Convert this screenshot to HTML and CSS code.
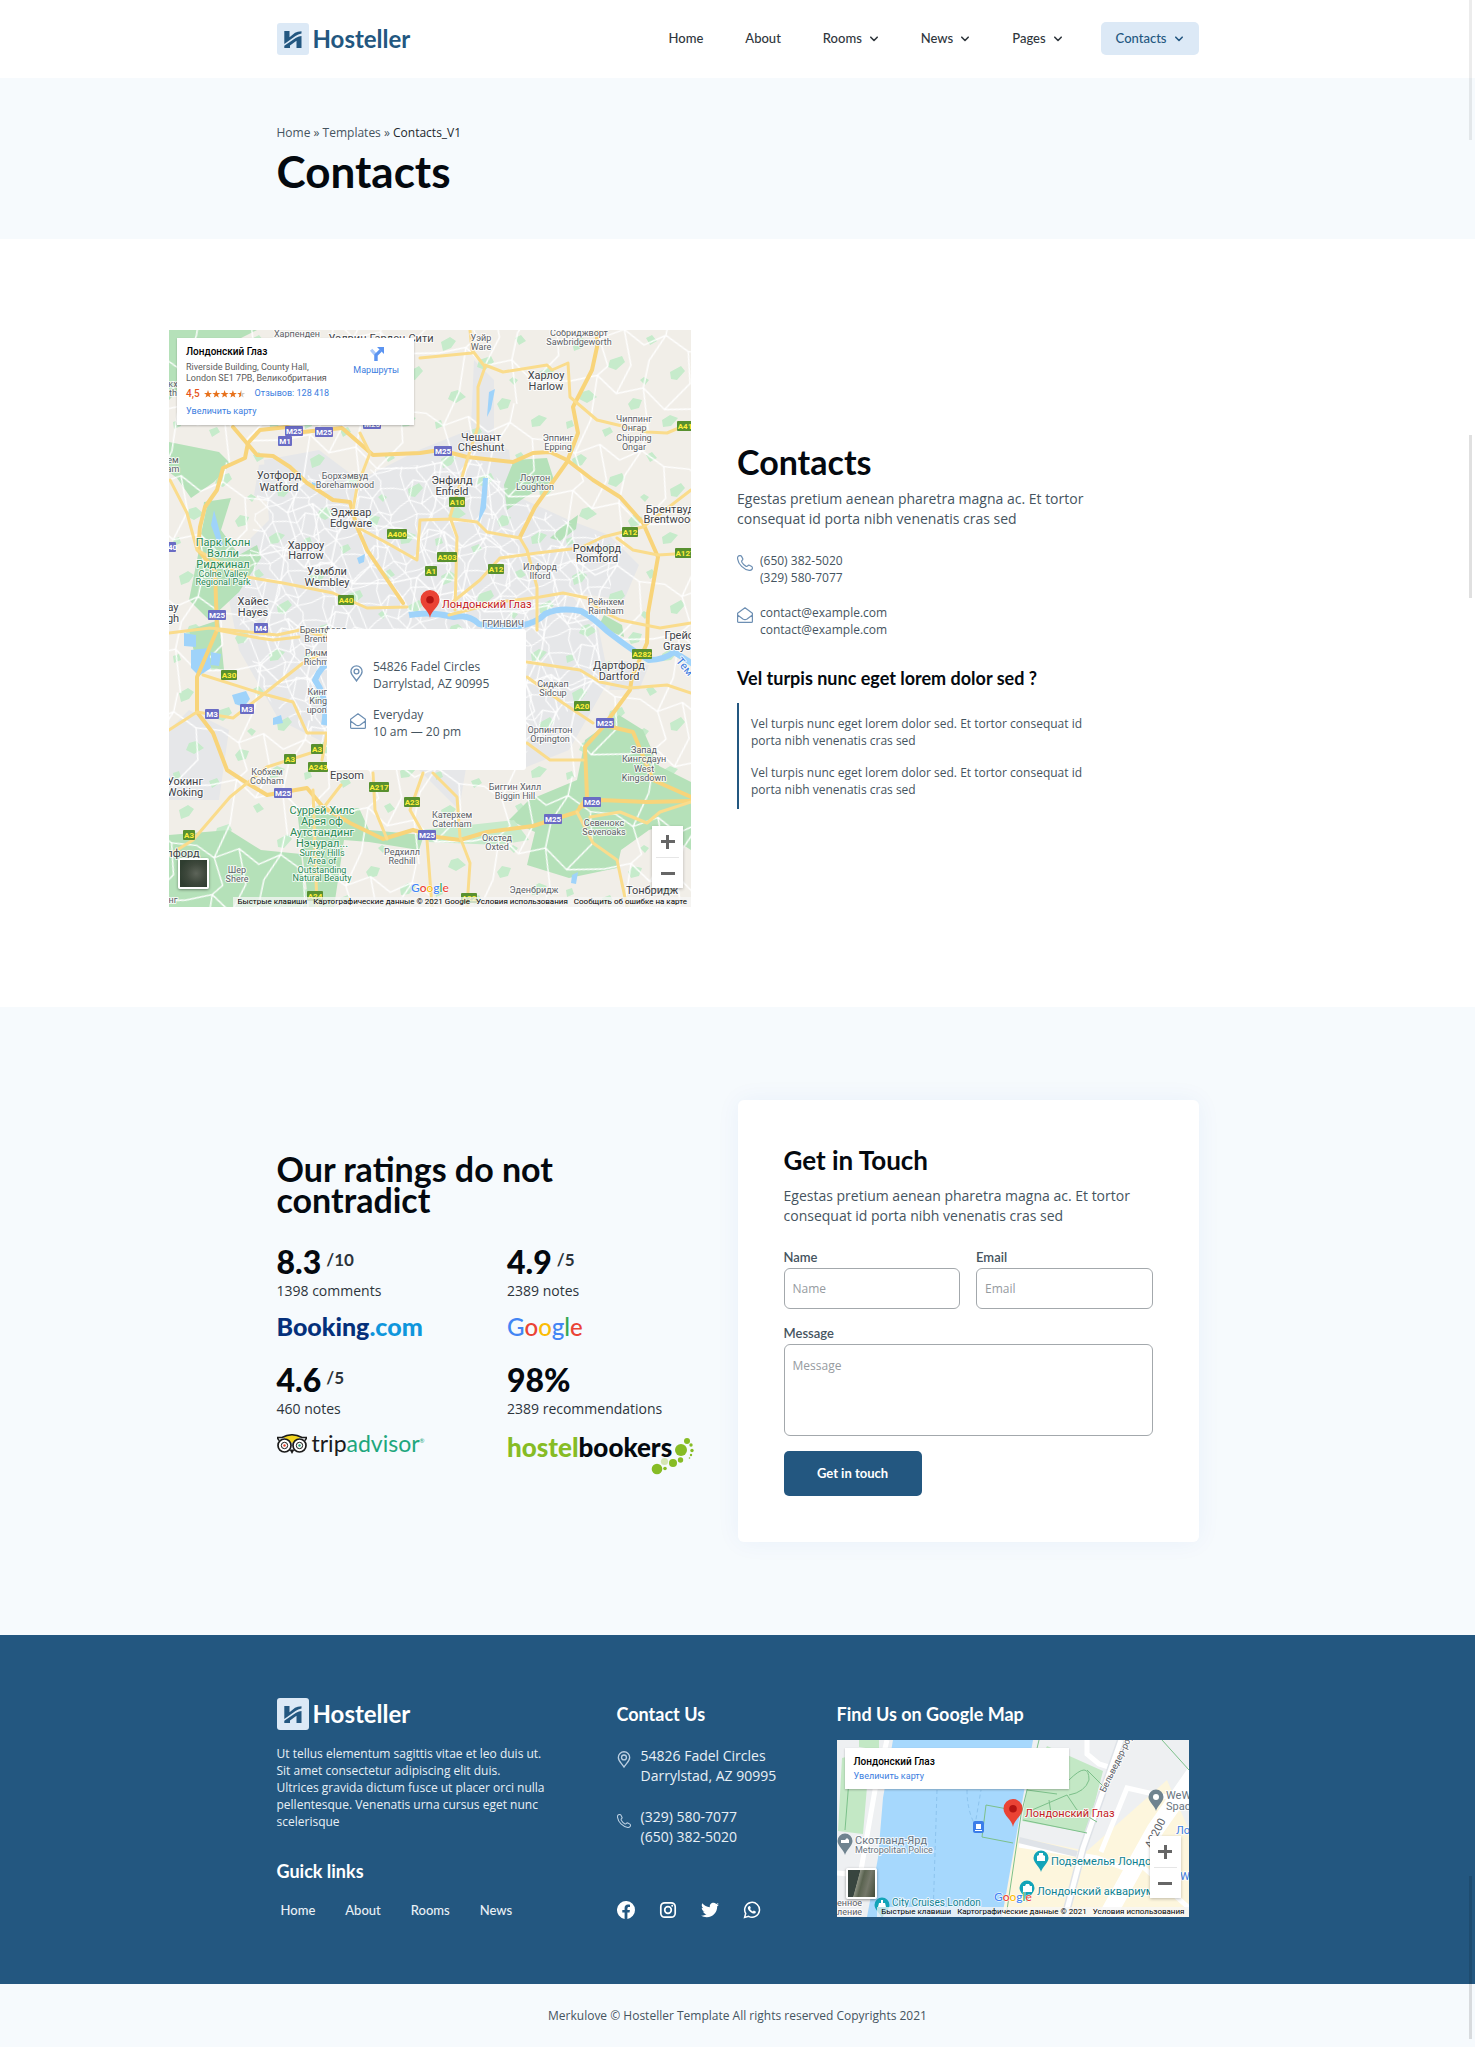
FILE: index.html
```html
<!DOCTYPE html>
<html lang="en">
<head>
<meta charset="utf-8">
<meta name="viewport" content="width=device-width, initial-scale=1">
<title>Contacts – Hosteller</title>
<link rel="stylesheet" href="styles.css">
</head>
<body>
<svg class="defs" width="0" height="0" aria-hidden="true">
  <defs>
    <symbol id="mark" viewBox="0 0 32 32">
      <rect width="32" height="32" rx="3" fill="#dce9f6"/>
      <path d="M7.300 8h5.200v6.200L18 9.800Q20.300 8.300 24.500 8.300V10.500Q21 11 18.500 13L7.300 21zM24.500 13V25h-5V17.800L13 22.500V25H7.300V22.800L19 14.800Q22 13 24.500 13z" fill="#235780"/>
    </symbol>
    <symbol id="chev" viewBox="0 0 10 10"><path d="M1.800 3.200L5 6.500l3.200-3.300" fill="none" stroke="currentColor" stroke-width="1.600" stroke-linecap="round" stroke-linejoin="round"/></symbol>
    <symbol id="phone" viewBox="0 0 16 16"><path d="M1.100 1.300C2 .4 3.700.3 4.400 1.200l1.300 2.400c.3.700.1 1.200-.5 1.700-.7.600-.7 1.100-.3 1.900.9 1.600 2.200 3 3.900 3.900.8.400 1.300.4 1.900-.3.500-.6 1-.8 1.700-.5l2.300 1.300c.9.600 1 2 .1 2.900-.7.700-1.600 1-2.500.9C6.600 14.600 1.400 9.400.6 3.800.5 2.800.5 1.900 1.100 1.300z" fill="none" stroke="currentColor" stroke-width="1.200"/></symbol>
    <symbol id="mail" viewBox="0 0 16 16"><path d="M.6 6.200L8 .8l7.400 5.400v8.200c0 .6-.4 1-1 1H1.600c-.6 0-1-.4-1-1zM.9 8.200l5 3.800c1.500 1 2.700 1 4.200 0l5-3.800" fill="none" stroke="currentColor" stroke-width="1.200" stroke-linejoin="round"/></symbol>
    <symbol id="place" viewBox="0 0 14 18"><path d="M7 17C5 13.300 1 10.800 1 6.800a6 6 0 0 1 12 0C13 10.800 9 13.300 7 17z" fill="none" stroke="currentColor" stroke-width="1.400"/><circle cx="7" cy="6.800" r="2.600" fill="none" stroke="currentColor" stroke-width="1.400"/></symbol>
    <symbol id="pin" viewBox="0 0 20 28"><path d="M10 28C9 20.500.5 17 .5 9.500a9.500 9.500 0 0 1 19 0C19.500 17 11 20.500 10 28z" fill="#ea4335"/><circle cx="10" cy="9.800" r="3.800" fill="#b31412"/></symbol>
    <g id="poi"><path d="M0 14C-1 9-7.500 5-7.500 0a7.500 7.500 0 0 1 15 0C7.500 5 1 9 0 14z"/></g>
    <rect id="m2" x="-7" y="-5" width="14" height="10" rx="1" fill="#6a6cc4"/>
    <rect id="m3" x="-9" y="-5" width="18" height="10" rx="1" fill="#6a6cc4"/>
    <rect id="a2" x="-6" y="-5" width="12" height="10" rx="1" fill="#58902f"/>
    <rect id="a3" x="-8" y="-5" width="16" height="10" rx="1" fill="#58902f"/>
    <rect id="a4" x="-10" y="-5" width="20" height="10" rx="1" fill="#58902f"/>
    <pattern id="lanes" width="96" height="84" patternUnits="userSpaceOnUse" patternTransform="rotate(12) scale(1.400)">
      <path d="M0 20L14 26 30 16 46 24 60 14 78 22 96 20M0 60L18 52 34 62 52 54 70 66 96 60M20 0L14 26 24 44 18 52 20 84M60 0L60 14 52 34 52 54 62 84M78 22L84 44 70 66M30 16L40 40 34 62" fill="none" stroke="#fff" stroke-width="1" stroke-linejoin="round"/>
    </pattern>
    <pattern id="streets" width="47" height="43" patternUnits="userSpaceOnUse" patternTransform="rotate(-17) scale(1.200)">
      <path d="M0 9L8 13 17 7 27 12 36 6 47 9M0 25L9 22 18 28 29 24 38 30 47 25M0 37L12 35 24 39 35 36 47 37M8 0L8 13 9 22 12 35 8 43M22 0L27 12 18 28 24 39 22 43M38 0L36 6 38 30 35 36 38 43M17 7L9 22M27 12L29 24 35 36" fill="none" stroke="#fff" stroke-width=".9"/>
    </pattern>
    <pattern id="groves" width="131" height="117" patternUnits="userSpaceOnUse">
      <path d="M10 12l9-5 6 4-5 7-8 3zM48 30l12-4 3 6-9 8-8-3zM84 8l6-3 5 6-7 4zM108 42l11-6 4 5-8 9-6-1zM20 62l7-2 8 7-10 6-8-4zM66 74l5-6 9 2-3 8-8 2zM100 90l8-5 8 3-7 8-8 1zM40 100l8-3 3 5-8 5zM4 92l6-2 2 6-7 3zM78 50l4-3 5 3-4 5z" fill="#c6ebcb"/>
    </pattern>
  </defs>
</svg>

<header class="site-header">
  <div class="container bar">
    <a class="brand" href="#"><svg class="brand-mark" aria-hidden="true"><use href="#mark"/></svg>Hosteller</a>
    <nav class="nav" aria-label="Main">
      <a href="#">Home</a>
      <a href="#">About</a>
      <a href="#">Rooms<svg class="chev" aria-hidden="true"><use href="#chev"/></svg></a>
      <a href="#">News<svg class="chev" aria-hidden="true"><use href="#chev"/></svg></a>
      <a href="#">Pages<svg class="chev" aria-hidden="true"><use href="#chev"/></svg></a>
      <a class="nav-active" href="#">Contacts<svg class="chev" aria-hidden="true"><use href="#chev"/></svg></a>
    </nav>
  </div>
</header>

<main>
  <section class="hero">
    <div class="container">
      <p class="crumbs"><a href="#">Home</a> » <a href="#">Templates</a> » <span>Contacts_V1</span></p>
      <h1>Contacts</h1>
    </div>
  </section>

  <section class="where">
    <div class="wide where-grid">
      <div class="map">
        <svg class="map-art" viewBox="0 0 522 577" role="img" aria-label="Map of London">
          <rect width="522" height="577" fill="#f1eee8"/>
          <path d="M95 130L150 120 190 150 250 120 300 100 340 120 345 165 400 190 440 205 470 235 455 270 400 262 430 300 440 350 400 420 350 440 300 420 290 480 250 440 180 440 150 410 110 390 70 320 60 270 70 220 100 190z" fill="#e6e7e9"/>
          <path d="M90 135L135 130 150 160 115 180 85 165zM305 30L325 50 325 125 300 140zM20 380L60 400 50 470 0 470V400zM450 330L480 335 470 360 440 360z" fill="#e6e7e9"/>
          <rect width="522" height="577" fill="url(#groves)"/>
          <path d="M0 0H88L60 14 20 50 0 70zM0 112L50 122 62 134 45 152 22 168 8 148 0 142zM35 172L62 168 52 200 70 225 88 215 92 228 70 262 40 290 20 270 30 220zM0 505L60 500 92 520 132 524 138 577H0zM128 480L190 478 200 500 255 505 250 520 200 512 175 510 165 577 140 577zM20 300L50 290 55 340 28 335zM416 410L450 385 474 400 490 436 522 452 522 488 480 500 452 520 448 538 400 548 358 535 366 502 340 490 360 470 408 450z" fill="#b5e1b9"/>
          <path d="M345 130L378 128 385 150 355 168 338 180 335 155zM460 440L522 455V520L490 500zM395 195l14-10-2 14-16 12-10-3zM435 285l18 10 2 12-10-4-14-10z" fill="#b5e1b9"/>
          <path d="M251 500L300 495 345 490 360 510 330 515 260 512zM80 65l20-5-10 30-20 0z" fill="#c7eacb"/>
          <rect width="522" height="577" fill="url(#lanes)"/>
          <path d="M90 150L250 135 300 120 350 170 450 215 440 265 425 300 435 345 380 400 340 440 180 440 100 370 70 300 80 230z" fill="url(#streets)"/>
          <path d="M15 303l12 2 0 12-12-1zM22 320l18-2 2 20-12 8-8-8zM42 322l10 2-2 12-8-1zM63 365l14-4 4 8-6 8-9-3zM104 388l8-3 2 8-10 2zM314 148l5 0-2 30-8 16 3-22zM320 62l6-3-4 20-4 8zM45 180l4 15 5 20-4 2-8-22zM143 152l8 3-2 6-6-2zM188 228l8-4-1 8-5 2zM403 545l6-3-2 12-5-1z" fill="#9fd3fa"/>
          <path d="M155 395Q160 370 146 350 152 335 165 330M240 285Q262 281 285 287 300 284 310 294 330 300 350 296 368 293 376 284 390 277 412 281 425 288 438 301 465 322 480 330 495 330 505 322L524 334" fill="none" stroke="#9fd3fa" stroke-width="6" stroke-linejoin="round"/>
          <g fill="none" stroke-linejoin="round" stroke-linecap="round">
            <g stroke="#f8d47a" stroke-width="4">
              <path d="M173 98L134 102 118 97 91 100 79 113 76 128 54 138 48 160 36 177 31 197 29 220 46 240 48 300 28 347 28 382 44 403 58 440 78 453 98 465 138 458 154 477 181 493 214 509 244 500 268 507 291 510 318 502 364 496 408 482 418 467 416 417 434 397 461 360 463 347 478 313 479 283 489 227 474 193 451 167 424 150 398 130 381 122 364 123 344 132 298 127 271 120 251 123 204 125z"/>
              <path d="M428 0L428 17 423 40 404 77 409 103 398 132 366 177 351 207M64 97L88 125 104 126 121 137 138 153 164 170 181 172 188 197 198 220 234 273M434 395L464 402 484 450 522 467M411 477L431 470 478 472 522 471"/>
            </g>
            <g stroke="#fadc8c" stroke-width="3">
              <path d="M301 0L303 20 316 37 309 57 309 97 299 127 281 187 288 207 286 280M251 28L303 23M316 35L334 42 378 35 383 40 399 33 401 67 428 90 478 102 498 103 522 93M188 197L218 213 248 230 251 190 284 189 308 192 318 202 351 208 358 220 368 257 368 300"/>
              <path d="M280 275L311 250 331 228 368 223 411 218 434 207 474 197 522 160M448 208L464 220 489 225 522 223M280 285L330 272 371 267 394 263 418 268 431 280 451 290 491 298 522 293M191 103L201 123 188 157 184 180M1 150L18 183 28 220 78 247 114 253 164 263 198 278 238 277M0 303L41 298 108 305 131 300 158 307M0 400L28 382 64 388 91 367 134 333 165 318M34 345L91 363 124 372 138 403 158 403 153 430"/>
              <path d="M0 525L24 510 61 467 98 437 151 420M144 460L148 577M204 443L206 480 218 509M254 443L241 480 258 510 263 577M264 443L288 467 291 507 301 533 298 577M358 332L411 340 431 352 461 358 498 355 522 363M358 347L394 373 424 393M408 482L424 513 448 530 458 577M421 487L451 482 478 493 491 482 522 472M358 413L381 430 414 430M155 477L172 455M48 300L90 308 104 310 130 307"/>
            </g>
          </g>
          <g class="lbl" text-anchor="middle">
            <text x="128" y="7">Харпенден</text>
            <g class="town">
              <text x="212" y="12">Уэлвин-Гарден-Сити</text>
              <text x="110" y="149">Уотфорд</text><text x="110" y="161">Watford</text>
              <text x="182" y="186">Эджвар</text><text x="182" y="197">Edgware</text>
              <text x="137" y="219">Харроу</text><text x="137" y="229">Harrow</text>
              <text x="158" y="245">Уэмбли</text><text x="158" y="256">Wembley</text>
              <text x="84" y="275">Хайес</text><text x="84" y="286">Hayes</text>
              <text x="377" y="49">Харлоу</text><text x="377" y="60">Harlow</text>
              <text x="312" y="111">Чешант</text><text x="312" y="121">Cheshunt</text>
              <text x="283" y="154">Энфилд</text><text x="283" y="165">Enfield</text>
              <text x="501" y="183">Брентвуд</text><text x="501" y="193">Brentwood</text>
              <text x="428" y="222">Ромфорд</text><text x="428" y="232">Romford</text>
              <text x="450" y="339">Дартфорд</text><text x="450" y="350">Dartford</text>
              <text x="510" y="309">Грейс</text><text x="508" y="320">Grays</text>
              <text x="16" y="455">Уокинг</text><text x="16" y="466">Woking</text>
              <text x="178" y="449">Epsom</text><text x="483" y="564">Тонбридж</text>
              <text x="14" y="527">лфорд</text><text x="4" y="281">ay</text><text x="4" y="292">gh</text>
            </g>
            <text x="4" y="133">ем</text><text x="4" y="142">am</text><text x="4" y="57">кх</text><text x="4" y="66">th</text><text x="4" y="573">нг</text>
            <text x="176" y="149">Борхэмвуд</text><text x="176" y="158">Borehamwood</text>
            <text x="312" y="11">Уэйр</text><text x="312" y="20">Ware</text>
            <text x="410" y="6">Собриджворт</text><text x="410" y="15">Sawbridgeworth</text>
            <text x="389" y="111">Эппинг</text><text x="389" y="120">Epping</text>
            <text x="465" y="92">Чиппинг</text><text x="465" y="101">Онгар</text><text x="465" y="111">Chipping</text><text x="465" y="120">Ongar</text>
            <text x="366" y="151">Лоутон</text><text x="366" y="160">Loughton</text>
            <text x="371" y="240">Илфорд</text><text x="371" y="249">Ilford</text>
            <text x="437" y="275">Рейнхем</text><text x="437" y="284">Rainham</text>
            <text x="154" y="303">Брентфорд</text><text x="154" y="312">Brentford</text>
            <text x="155" y="326">Ричмонд</text><text x="155" y="335">Richmond</text>
            <text x="158" y="365">Кингстон</text><text x="158" y="374">Kingston</text><text x="165" y="383">upon Thames</text>
            <text x="98" y="445">Кобхем</text><text x="98" y="454">Cobham</text>
            <text x="233" y="525">Редхилл</text><text x="233" y="534">Redhill</text>
            <text x="68" y="543">Шер</text><text x="68" y="552">Shere</text>
            <text x="334" y="297">ГРИНВИЧ</text>
            <text x="384" y="357">Сидкап</text><text x="384" y="366">Sidcup</text>
            <text x="381" y="403">Орпингтон</text><text x="381" y="412">Orpington</text>
            <text x="475" y="423">Запад</text><text x="475" y="432">Кингсдаун</text><text x="475" y="442">West</text><text x="475" y="451">Kingsdown</text>
            <text x="346" y="460">Биггин Хилл</text><text x="346" y="469">Biggin Hill</text>
            <text x="283" y="488">Катерхем</text><text x="283" y="497">Caterham</text>
            <text x="328" y="511">Окстед</text><text x="328" y="520">Oxted</text>
            <text x="435" y="496">Севенокс</text><text x="435" y="505">Sevenoaks</text>
            <text x="365" y="563">Эденбридж</text>
            <g class="park">
              <text class="big" x="54" y="216">Парк Колн</text><text class="big" x="54" y="227">Вэлли</text><text class="big" x="54" y="238">Риджинал</text>
              <text x="54" y="247">Colne Valley</text><text x="54" y="255">Regional Park</text>
              <text class="big" x="153" y="484">Суррей Хилс</text><text class="big" x="153" y="495">Арея оф</text><text class="big" x="153" y="506">Аутстандинг</text><text class="big" x="153" y="517">Нэчурал...</text>
              <text x="153" y="526">Surrey Hills</text><text x="153" y="534">Area of</text><text x="153" y="543">Outstanding</text><text x="153" y="551">Natural Beauty</text>
            </g>
            <text class="river" transform="translate(513 339) rotate(50)">Тем</text>
          </g>
          <g class="shield">
            <g transform="translate(125 101)"><use href="#m3"/><text y="3">M25</text></g>
            <g transform="translate(155 102)"><use href="#m3"/><text y="3">M25</text></g>
            <g transform="translate(203 94)"><use href="#m3"/><text y="3">M25</text></g>
            <g transform="translate(116 111)"><use href="#m2"/><text y="3">M1</text></g>
            <g transform="translate(0 217)"><use href="#m2"/><text y="3">M40</text></g>
            <g transform="translate(48 285)"><use href="#m3"/><text y="3">M25</text></g>
            <g transform="translate(274 121)"><use href="#m3"/><text y="3">M25</text></g>
            <g transform="translate(92 298)"><use href="#m2"/><text y="3">M4</text></g>
            <g transform="translate(43 384)"><use href="#m2"/><text y="3">M3</text></g>
            <g transform="translate(78 379)"><use href="#m2"/><text y="3">M3</text></g>
            <g transform="translate(114 463)"><use href="#m3"/><text y="3">M25</text></g>
            <g transform="translate(436 393)"><use href="#m3"/><text y="3">M25</text></g>
            <g transform="translate(423 472)"><use href="#m3"/><text y="3">M26</text></g>
            <g transform="translate(384 489)"><use href="#m3"/><text y="3">M25</text></g>
            <g transform="translate(258 505)"><use href="#m3"/><text y="3">M25</text></g>
            <g class="a">
              <g transform="translate(228 204)"><use href="#a4"/><text y="3">A406</text></g>
              <g transform="translate(177 270)"><use href="#a3"/><text y="3">A40</text></g>
              <g transform="translate(288 172)"><use href="#a3"/><text y="3">A10</text></g>
              <g transform="translate(516 96)"><use href="#a3"/><text y="3">A41</text></g>
              <g transform="translate(278 227)"><use href="#a4"/><text y="3">A503</text></g>
              <g transform="translate(262 241)"><use href="#a2"/><text y="3">A1</text></g>
              <g transform="translate(327 239)"><use href="#a3"/><text y="3">A12</text></g>
              <g transform="translate(461 202)"><use href="#a3"/><text y="3">A12</text></g>
              <g transform="translate(516 223)"><use href="#a4"/><text y="3">A127</text></g>
              <g transform="translate(60 345)"><use href="#a3"/><text y="3">A30</text></g>
              <g transform="translate(121 429)"><use href="#a2"/><text y="3">A3</text></g>
              <g transform="translate(148 419)"><use href="#a2"/><text y="3">A3</text></g>
              <g transform="translate(149 437)"><use href="#a4"/><text y="3">A243</text></g>
              <g transform="translate(210 457)"><use href="#a4"/><text y="3">A217</text></g>
              <g transform="translate(243 472)"><use href="#a3"/><text y="3">A23</text></g>
              <g transform="translate(20 505)"><use href="#a2"/><text y="3">A3</text></g>
              <g transform="translate(146 566)"><use href="#a3"/><text y="3">A24</text></g>
              <g transform="translate(300 568)"><use href="#a3"/><text y="3">A22</text></g>
              <g transform="translate(473 324)"><use href="#a4"/><text y="3">A282</text></g>
              <g transform="translate(413 376)"><use href="#a3"/><text y="3">A20</text></g>
            </g>
          </g>
          <use href="#pin" x="251" y="260" width="20" height="28"/>
          <g class="lbl"><text class="spot" x="273" y="278">Лондонский Глаз</text></g>
          <text class="glogo" x="242" y="562"><tspan fill="#4285f4">G</tspan><tspan fill="#ea4335">o</tspan><tspan fill="#fbbc05">o</tspan><tspan fill="#4285f4">g</tspan><tspan fill="#34a853">l</tspan><tspan fill="#ea4335">e</tspan></text>
        </svg>
        <div class="info">
          <div class="info-text">
            <strong>Лондонский Глаз</strong>
            <span>Riverside Building, County Hall,<br>London SE1 7PB, Великобритания</span>
            <div class="score"><b>4,5</b>
              <svg class="stars" viewBox="0 0 42 8" aria-label="4,5"><path d="M4 0l1 2.900h3L5.600 4.700l.9 2.900L4 5.900 1.500 7.600l.9-2.900L0 2.900h3zM12.300 0l1 2.900h3l-2.400 1.800.9 2.900-2.500-1.700-2.500 1.700.9-2.900-2.400-1.800h3zM20.600 0l1 2.900h3l-2.400 1.800.9 2.900-2.500-1.700-2.500 1.700.9-2.900-2.400-1.800h3zM28.900 0l1 2.900h3l-2.400 1.800.9 2.900-2.500-1.700-2.500 1.700.9-2.900-2.400-1.800h3zM37.200 0v5.900l-2.500 1.700.9-2.900-2.400-1.800h3z" fill="#e7711b"/><path d="M37.200 0l1 2.900h3l-2.400 1.800.9 2.900-2.500-1.700z" fill="#ccc"/></svg>
              <a href="#">Отзывов: 128 418</a></div>
            <a href="#">Увеличить карту</a>
          </div>
          <a class="route" href="#"><svg viewBox="0 0 14 14" aria-hidden="true"><path d="M6.500 14V8.500L2 3.500" fill="none" stroke="#a9c8fa" stroke-width="3"/><path d="M6.500 14V8.500L11 4" fill="none" stroke="#5b94f1" stroke-width="3"/><path d="M7.500 1H14v6.500z" fill="#5b94f1"/></svg>Маршруты</a>
        </div>
        <div class="place-card">
          <p class="contact-row"><svg class="ico-place" aria-hidden="true"><use href="#place"/></svg><span>54826 Fadel Circles<br>Darrylstad, AZ 90995</span></p>
          <p class="contact-row"><svg class="ico" aria-hidden="true"><use href="#mail"/></svg><span>Everyday<br>10 am — 20 pm</span></p>
        </div>
        <button class="sat" type="button" aria-label="Satellite view"></button>
        <div class="zoom"><button type="button" aria-label="Zoom in"><i class="plus"></i></button><button type="button" aria-label="Zoom out"><i class="minus"></i></button></div>
        <div class="legal"><span>Быстрые клавиши</span><span>Картографические данные © 2021 Google</span><span>Условия использования</span><span>Сообщить об ошибке на карте</span></div>
      </div>
      <div class="details">
        <h2>Contacts</h2>
        <p class="lead">Egestas pretium aenean pharetra magna ac. Et tortor consequat id porta nibh venenatis cras sed</p>
        <p class="contact-row"><svg class="ico" aria-hidden="true"><use href="#phone"/></svg><span>(650) 382-5020<br>(329) 580-7077</span></p>
        <p class="contact-row"><svg class="ico" aria-hidden="true"><use href="#mail"/></svg><span>contact@example.com<br>contact@example.com</span></p>
        <h3>Vel turpis nunc eget lorem dolor sed ?</h3>
        <blockquote>
          <p>Vel turpis nunc eget lorem dolor sed. Et tortor consequat id porta nibh venenatis cras sed</p>
          <p>Vel turpis nunc eget lorem dolor sed. Et tortor consequat id porta nibh venenatis cras sed</p>
        </blockquote>
      </div>
    </div>
  </section>

  <section class="ratings">
    <div class="container ratings-grid">
      <div class="ratings-side">
        <h2>Our ratings do not contradict</h2>
        <div class="scores">
          <div><p class="num">8.3<span>/10</span></p><p class="note">1398 comments</p><p class="logo booking">Booking<span>.com</span></p></div>
          <div><p class="num">4.9<span>/5</span></p><p class="note">2389 notes</p><p class="logo google"><span class="b">G</span><span class="r">o</span><span class="y">o</span><span class="b">g</span><span class="g">l</span><span class="r">e</span></p></div>
          <div><p class="num">4.6<span>/5</span></p><p class="note">460 notes</p>
            <p class="logo trip"><svg class="owl" viewBox="0 0 30 20" aria-hidden="true"><path d="M6 3Q15-1.500 24 3L15 9z" fill="#f2d51f"/><path d="M0 3.500h5Q15-2 25 3.500h5L28 6.500M2 6.500L0 3.500" fill="none" stroke="#1b1b1b" stroke-width="1.500"/><circle cx="7.500" cy="11.500" r="6.500" fill="#fff" stroke="#1b1b1b" stroke-width="1.700"/><circle cx="22.500" cy="11.500" r="6.500" fill="#fff" stroke="#1b1b1b" stroke-width="1.700"/><circle cx="7.500" cy="11.500" r="3.200" fill="none" stroke="#1b1b1b"/><circle cx="22.500" cy="11.500" r="3.200" fill="none" stroke="#1b1b1b"/><circle cx="7.500" cy="11.500" r="1.200" fill="#e8452c"/><circle cx="22.500" cy="11.500" r="1.200" fill="#20a67c"/><path d="M12.500 15.500L15 20l2.500-4.500z" fill="#1b1b1b"/></svg><span>trip<em>advisor</em><sup>®</sup></span></p></div>
          <div><p class="num">98%</p><p class="note">2389 recommendations</p>
            <p class="logo hostel"><span><em>hostel</em>bookers</span><svg viewBox="0 0 44 38" aria-hidden="true"><g fill="#86bc25"><circle cx="30" cy="13" r="6"/><circle cx="36" cy="4" r="3"/><circle cx="40" cy="8" r="1.700"/><circle cx="41" cy="13.500" r="1.700"/><circle cx="40" cy="18" r="1.200"/><circle cx="38.500" cy="21" r=".8"/><circle cx="29.500" cy="23" r="2.700"/><circle cx="22" cy="26" r="4"/><circle cx="14" cy="31.500" r="1.800"/><circle cx="6" cy="32" r="5.300"/></g><circle cx="13.500" cy="24.500" r="3.600" fill="#d5e6b4"/></svg></p></div>
        </div>
      </div>
      <form class="card">
        <h2>Get in Touch</h2>
        <p class="lead">Egestas pretium aenean pharetra magna ac. Et tortor consequat id porta nibh venenatis cras sed</p>
        <div class="fields">
          <div class="field"><label for="name">Name</label><input id="name" type="text" placeholder="Name"></div>
          <div class="field"><label for="email">Email</label><input id="email" type="email" placeholder="Email"></div>
          <div class="field full"><label for="message">Message</label><textarea id="message" placeholder="Message"></textarea></div>
        </div>
        <button class="send" type="submit">Get in touch</button>
      </form>
    </div>
  </section>
</main>

<footer class="site-footer">
  <div class="container footer-grid">
    <div class="about">
      <a class="brand" href="#"><svg class="brand-mark" aria-hidden="true"><use href="#mark"/></svg>Hosteller</a>
      <p>Ut tellus elementum sagittis vitae et leo duis ut. Sit amet consectetur adipiscing elit duis.<br>Ultrices gravida dictum fusce ut placer orci nulla pellentesque. Venenatis urna cursus eget nunc scelerisque</p>
      <h3>Guick links</h3>
      <nav class="quick" aria-label="Quick links"><a href="#">Home</a><a href="#">About</a><a href="#">Rooms</a><a href="#">News</a></nav>
    </div>
    <div class="reach">
      <h3>Contact Us</h3>
      <p class="contact-row"><svg class="ico-place" aria-hidden="true"><use href="#place"/></svg><span>54826 Fadel Circles<br>Darrylstad, AZ 90995</span></p>
      <p class="contact-row"><svg class="ico" aria-hidden="true"><use href="#phone"/></svg><span>(329) 580-7077<br>(650) 382-5020</span></p>
      <div class="social">
        <a href="#" aria-label="Facebook"><svg viewBox="0 0 18 18"><path d="M18 9a9 9 0 1 0-10.400 8.900v-6.300H5.300V9h2.300V7c0-2.300 1.300-3.500 3.400-3.500 1 0 2 .2 2 .2v2.200h-1.100c-1.100 0-1.500.7-1.500 1.400V9h2.500l-.4 2.600h-2.100v6.300A9 9 0 0 0 18 9z" fill="currentColor"/></svg></a>
        <a href="#" aria-label="Instagram"><svg viewBox="0 0 18 18"><rect x="1.800" y="1.800" width="14.400" height="14.400" rx="4" fill="none" stroke="currentColor" stroke-width="1.700"/><circle cx="9" cy="9" r="3.300" fill="none" stroke="currentColor" stroke-width="1.700"/><circle cx="13.200" cy="4.800" r="1" fill="currentColor"/></svg></a>
        <a href="#" aria-label="Twitter"><svg viewBox="0 0 18 18"><path d="M16.200 5.300v.5c0 4.900-3.700 10.500-10.500 10.500-2.100 0-4-.6-5.700-1.700 2 .2 3.900-.3 5.500-1.500-1.600 0-3-1.100-3.500-2.600.6.100 1.100.1 1.700-.1C2 10.100.7 8.700.7 6.800c.5.300 1.100.5 1.700.5C.8 6.200.2 4.100 1.300 2.300c1.800 2.300 4.500 3.700 7.600 3.900-.6-2.500 1.300-4.500 3.600-4.500 1 0 2 .4 2.700 1.200.8-.2 1.600-.5 2.300-.9-.3.900-.9 1.500-1.600 2 .7-.1 1.400-.3 2.100-.6-.5.800-1.100 1.400-1.800 1.900z" fill="currentColor"/></svg></a>
        <a href="#" aria-label="WhatsApp"><svg viewBox="0 0 18 18"><path d="M1.600 16.400l1.100-3.900a7.400 7.400 0 1 1 2.900 2.800z" fill="none" stroke="currentColor" stroke-width="1.500"/><path d="M6.500 4.900c.4 0 .5 0 .7.500l.6 1.400c.1.300-.4.900-.7 1.200.6 1.200 1.700 2 2.800 2.500.4-.4.700-1 1-1l1.800.9c.4.300 0 1.500-.5 1.800-1.200.8-2.900.2-4.500-1-1.500-1.100-2.900-3-2.900-4.300 0-.9.700-2 1.700-2z" fill="currentColor"/></svg></a>
      </div>
    </div>
    <div class="find">
      <h3>Find Us on Google Map</h3>
      <div class="map mini">
        <svg class="map-art" viewBox="0 0 352 177" role="img" aria-label="Map around the London Eye">
          <rect width="352" height="177" fill="#eef0f2"/>
          <path d="M180 97L250 111 330 40 352 90V177H165z" fill="#fdf6dd"/>
          <path d="M56 0H196L165 177H30L41 118 46 58z" fill="#a6d8fd"/>
          <path d="M5 18L33 11 26 94 1 91zM22 0h20v10l-20-3zM210 6L266 31 250 93 185 81 190 48z" fill="#c3e8c5"/>
          <path d="M100 50L96 177M130 50q0 20 8 35l6-35" fill="none" stroke="#8dc4ee" stroke-dasharray="4 3"/>
          <path d="M50 0L38 50 24 130M0 133L34 136M182 105L260 118 300 133M250 0L250 14 262 24 275 28M264 112L290 48 352 62M296 118L352 168" fill="none" stroke="#fff" stroke-width="5"/>
          <path d="M284 0L246 108 228 177" fill="none" stroke="#dfe3e8" stroke-width="8"/>
          <path d="M284 0L246 108 228 177" fill="none" stroke="#fff" stroke-width="5"/>
          <path d="M360 30L318 90 268 180" fill="none" stroke="#fff" stroke-width="17"/>
          <path d="M182 100L240 114" fill="none" stroke="#dfe3e8" stroke-width="6"/>
          <path d="M202 0L184 75 170 170M176 70L149 65 145 97 176 103M186 80L250 93M195 70L230 55 240 70 260 82M212 60L215 80M232 40q20-20 20 0-4 12-20 15M250 30l20 20M325 0l27 30M14 15L8 90M190 50l30 4" fill="none" stroke="#7cc08a"/>
          <g class="lbl">
            <g class="wide-lbl">
              <text class="grey" x="18" y="104">Скотланд-Ярд</text>
              <text class="grey" x="329" y="59">WeW</text><text class="grey" x="329" y="70">Spac</text>
              <text class="teal" x="214" y="125">Подземелья Лондо</text>
              <text class="teal" x="200" y="155">Лондонский аквариум</text>
              <text class="blue" x="339" y="94">Ло</text><text class="blue" x="343" y="140">W</text>
              <text transform="translate(314 109) rotate(-62)">A3200</text>
            </g>
            <text class="teal mid" x="55" y="166">City Cruises London</text>
            <text class="grey" x="18" y="113">Metropolitan Police</text>
            <text transform="translate(268 53) rotate(-64)">Бельведер-роуд</text>
            <text x="0" y="166">енное</text><text x="0" y="175">ление</text>
            <text class="spot" x="188" y="77">Лондонский Глаз</text>
          </g>
          <g fill="#6f838f"><use href="#poi" x="319" y="57"/><use href="#poi" x="8" y="101"/></g>
          <g fill="#12a4b8"><use href="#poi" x="204" y="118"/><use href="#poi" x="190" y="148"/><use href="#poi" x="45" y="165"/></g>
          <circle cx="319" cy="57" r="3" fill="#fff"/><path d="M4 103h8v-3l-2-2-2 2H4zM200 121v-5l2-1v-2h4v2l2 1v5zM186 146h2l1-2h3l1 2h2v6h-9zM41 167l1-4h6l1 4zM44 160h2v3h-2z" fill="#fff"/>
          <rect x="136" y="81" width="11" height="12" rx="2" fill="#3b7de9"/><path d="M139 84h5v5h-5zM138 90h7v1h-7z" fill="#fff"/>
          <use href="#pin" x="166" y="59" width="20" height="28"/>
          <text class="glogo" x="157" y="161"><tspan fill="#4285f4">G</tspan><tspan fill="#ea4335">o</tspan><tspan fill="#fbbc05">o</tspan><tspan fill="#4285f4">g</tspan><tspan fill="#34a853">l</tspan><tspan fill="#ea4335">e</tspan></text>
        </svg>
        <div class="info"><div class="info-text"><strong>Лондонский Глаз</strong><a href="#">Увеличить карту</a></div></div>
        <button class="sat" type="button" aria-label="Satellite view"></button>
        <div class="zoom"><button type="button" aria-label="Zoom in"><i class="plus"></i></button><button type="button" aria-label="Zoom out"><i class="minus"></i></button></div>
        <div class="legal"><span>Быстрые клавиши</span><span>Картографические данные © 2021</span><span>Условия использования</span></div>
      </div>
    </div>
  </div>
</footer>
<p class="copyright">Merkulove © Hosteller Template All rights reserved Copyrights 2021</p>

<i class="thumb thumb-top"></i><i class="thumb thumb-mid"></i><i class="thumb thumb-end"></i>
</body>
</html>
```

FILE: styles.css
```css
*, *::before, *::after { box-sizing: border-box; }
body {
  margin: 0;
  position: relative;
  background: #fff;
  color: #455460;
  font: 12px/17px "Open Sans", "Noto Sans", sans-serif;
}
h1, h2, h3, p, blockquote { margin: 0; }
h1, h2, h3, .brand, .nav, .quick, label, .send, .num { font-family: Lato, "Open Sans", sans-serif; }
h1, h2, h3 { color: #04090f; font-weight: 700; }
a { color: inherit; text-decoration: none; }
button { font: inherit; border: 0; padding: 0; cursor: pointer; }
svg { display: block; flex: none; }
em { font-style: normal; }
.defs { position: absolute; }

.container, .wide { width: calc(100% - 48px); margin: 0 auto; }
.container { max-width: 922px; }
.wide { max-width: 1137px; }

/* header */
.bar { display: flex; justify-content: space-between; align-items: center; padding: 22px 0 23px; }
.brand { display: flex; align-items: center; gap: 4px; color: #235780; font-size: 24px; line-height: 33px; font-weight: 700; }
.brand-mark { width: 32px; height: 32px; }
.nav { display: flex; align-items: center; gap: 42px; font-size: 13px; font-weight: 500; color: #2f363c; }
.nav a { display: flex; align-items: center; gap: 7px; }
.chev { width: 10px; height: 10px; }
.nav .nav-active { height: 33px; padding: 0 15px; margin-left: -4px; border-radius: 5px; background: #dce9f6; color: #235780; }

/* hero */
.hero { background: #f6fafd; padding: 45px 0; }
.crumbs { line-height: 20px; margin-bottom: 6px; }
.crumbs span { color: #22282d; }
h1 { font-size: 44px; line-height: 45px; }

/* map and details */
.where { padding: 91px 0 100px; }
.where-grid { display: grid; grid-template-columns: 522fr 569fr; gap: 46px; align-items: center; }
.map { position: relative; overflow: hidden; font-family: Roboto, sans-serif; color: #222; }
.map-art { width: 100%; height: auto; }
.lbl { font-size: 9px; fill: #5b6066; paint-order: stroke; stroke: #fff; stroke-width: 2px; stroke-linejoin: round; stroke-opacity: .8; }
.town, .big, .wide-lbl { font-size: 11px; }
.town { fill: #3f4348; }
.park { fill: #2c8a56; }
.river, .blue { fill: #3f7ce0; font-size: 11px; }
.spot { fill: #c5221f; font-size: 11px; }
.teal { fill: #0f8292; }
.mid { font-size: 10px; }
.grey { fill: #6a7580; }
.shield { fill: #fff; font-size: 8px; font-weight: 700; text-anchor: middle; }
.shield .a { fill: #ffee3b; }
.glogo { font: 500 12px Lato, sans-serif; paint-order: stroke; stroke: #fff; stroke-width: 1px; }

.info { position: absolute; top: 8px; left: 8px; width: 237px; padding: 8px 9px; display: flex; justify-content: space-between; background: #fff; box-shadow: 0 1px 2px rgba(0, 0, 0, .25); font-size: 9px; line-height: 11px; color: #5b5b5b; }
.info-text { display: flex; flex-direction: column; align-items: flex-start; }
.info strong { font-size: 10px; line-height: 12px; font-weight: 500; color: #000; margin-bottom: 4px; }
.info a { color: #3b7de0; }
.score { display: flex; align-items: center; gap: 4px; margin: 4px 0 7px; }
.score b { font-size: 10px; font-weight: 500; color: #e7541b; }
.score a { margin-left: 5px; }
.stars { width: 42px; height: 8px; }
.route { display: flex; flex-direction: column; align-items: center; gap: 4px; margin-right: 6px; }
.route svg { width: 15px; height: 15px; }
.place-card { position: absolute; top: 299px; left: 158px; width: 199px; height: 141px; padding: 29px 23px; background: #fff; border-radius: 3px; display: flex; flex-direction: column; gap: 14px; font: 12px/17px "Open Sans", sans-serif; color: #455460; }
.contact-row { display: flex; gap: 7px; }
.contact-row svg { color: #6d8fb3; margin-top: 3px; }
.ico { width: 16px; height: 16px; }
.ico-place { width: 13px; height: 17px; margin-right: 3px; }
.place-card svg { margin-top: 7px; }
.sat { position: absolute; left: 9px; bottom: 18px; width: 31px; height: 31px; border: 2px solid #fff; border-radius: 2px; background: radial-gradient(circle at 60% 50%, #5d6459, #3e483c 45%, #2f3d30 80%); box-shadow: 0 1px 3px rgba(0, 0, 0, .4); }
.mini .sat { background: linear-gradient(105deg, #38453f 35%, #8a8f80 37%, #5a6350 50%, #75786a 70%, #414b38); }
.zoom { position: absolute; right: 8px; bottom: 19px; width: 31px; display: flex; flex-direction: column; background: #fff; padding: 0 4px; box-shadow: 0 1px 3px rgba(0, 0, 0, .25); }
.zoom button { height: 31px; background: none; display: grid; place-items: center; }
.zoom button + button { border-top: 1px solid #e6e6e6; }
.plus, .minus { display: block; width: 14px; height: 14px; background: linear-gradient(#666, #666) center / 14px 3px no-repeat; }
.plus { background: linear-gradient(#666, #666) center / 14px 3px no-repeat, linear-gradient(#666, #666) center / 3px 14px no-repeat; }
.legal { position: absolute; right: 0; bottom: 0; display: flex; gap: 6px; padding: 0 4px; font-size: 8px; line-height: 10px; color: #000; background: rgba(245, 245, 245, .75); white-space: nowrap; }

.details { padding-top: 16px; max-width: 370px; }
h2 { font-size: 34px; }
.details h2 { line-height: 36px; margin-bottom: 9px; }
.lead { font-size: 14px; line-height: 20px; margin-bottom: 23px; max-width: 360px; }
.details .contact-row { margin-bottom: 18px; }
.details h3 { font-size: 18px; line-height: 24px; margin: 28px 0 13px; }
blockquote { border-left: 2px solid #235780; padding: 12px 0 11px 12px; display: grid; gap: 15px; }

/* ratings */
.ratings { background: #f6fafd; padding: 93px 0; }
.ratings-grid { display: grid; grid-template-columns: 1fr 1fr; }
.ratings-side { padding-top: 53px; }
.ratings-side h2 { line-height: 31px; max-width: 320px; margin-bottom: 31px; }
.scores { display: grid; grid-template-columns: 1fr 1fr; row-gap: 24px; }
.num { display: flex; gap: 5px; font-size: 32px; line-height: 32px; font-weight: 900; color: #04090f; margin-bottom: 3px; }
.num span { font-size: 17px; line-height: 28px; font-weight: 700; color: #2c343b; }
.note { font-size: 14px; line-height: 20px; color: #2c343b; margin-bottom: 15px; }
.logo { display: flex; height: 24px; font: 900 25px/20px Lato, sans-serif; white-space: nowrap; }
.booking { color: #04307b; }
.booking span { color: #0f96dc; }
.google { font-size: 24px; line-height: 22px; font-weight: 500; }
.b { color: #4285f4; } .r { color: #ea4335; } .y { color: #fbbc05; } .g { color: #34a853; }
.trip { font-size: 23px; line-height: 18px; font-weight: 400; color: #1b1b1b; gap: 5px; }
.owl { width: 30px; height: 20px; }
.trip em { color: #20a67c; }
.trip sup { font-size: 6px; line-height: 6px; color: #20a67c; }
.hostel { height: 38px; font-size: 26px; line-height: 26px; color: #04090f; }
.hostel em { color: #86bc25; }
.hostel svg { width: 44px; height: 38px; margin: 3px 0 0 -21px; }

.card { background: #fff; border-radius: 6px; padding: 46px; box-shadow: 0 0 24px rgba(35, 87, 200, .06); }
.card h2 { font-size: 26px; line-height: 28px; margin-bottom: 12px; }
.fields { display: grid; grid-template-columns: 1fr 1fr; gap: 16px; margin-bottom: 15px; }
.field { display: flex; flex-direction: column; gap: 3px; min-width: 0; }
.full { grid-column: 1 / -1; }
label { font-size: 13px; line-height: 16px; font-weight: 600; color: #455460; }
input, textarea { width: 100%; height: 41px; padding: 0 8px; border: 1px solid #a3a8ac; border-radius: 6px; background: #fff; font: 12px/17px "Open Sans", sans-serif; color: #455460; }
textarea { display: block; height: 92px; padding: 12px 8px; resize: none; }
::placeholder { color: #969b9f; opacity: 1; }
.send { width: 138px; height: 45px; border-radius: 5px; background: #235780; color: #fff; font-size: 13px; font-weight: 700; }

/* footer */
.site-footer { background: #235780; color: #e9f0f6; padding: 62px 0 64px; }
.footer-grid { display: grid; grid-template-columns: 340fr 220fr 362fr; }
.site-footer h3 { color: #fff; font-size: 18px; line-height: 24px; }
.site-footer .brand { color: #fff; }
.about p { max-width: 280px; margin: 15px 0 29px; }
.quick { display: flex; gap: 30px; padding: 17px 4px 0; line-height: 20px; font-size: 13px; font-weight: 500; }
.reach { padding-top: 5px; }
.reach h3 { margin-bottom: 20px; }
.reach .contact-row { font-size: 14px; line-height: 20px; margin-bottom: 21px; gap: 10px; }
.reach .contact-row svg { color: #bcd0e2; margin-top: 7px; width: 14px; height: 14px; margin-right: 0; }
.reach .contact-row .ico-place { height: 17px; margin-top: 5px; }
.social { display: flex; gap: 24px; margin-top: 54px; color: #fff; }
.social svg { width: 18px; height: 18px; }
.find { padding-top: 5px; }
.find h3 { margin-bottom: 14px; }
.mini { max-width: 352px; }
.mini .info { width: 224px; padding-bottom: 7px; }
.mini .info strong { margin-bottom: 3px; }
.copyright { background: #f6fafd; text-align: center; padding: 23px 24px; }

/* scroll thumbs */
.thumb { position: absolute; right: 3px; width: 3px; background: rgba(0, 0, 0, .12); }
.thumb-top { top: 0; height: 140px; opacity: .6; }
.thumb-mid { top: 435px; height: 163px; }
.thumb-end { bottom: 8px; height: 163px; }

@media (max-width: 860px) {
  .where-grid, .ratings-grid, .footer-grid { grid-template-columns: 1fr; gap: 40px; }
  .bar { flex-wrap: wrap; gap: 16px; }
  .nav { flex-wrap: wrap; gap: 20px; }
}
```
